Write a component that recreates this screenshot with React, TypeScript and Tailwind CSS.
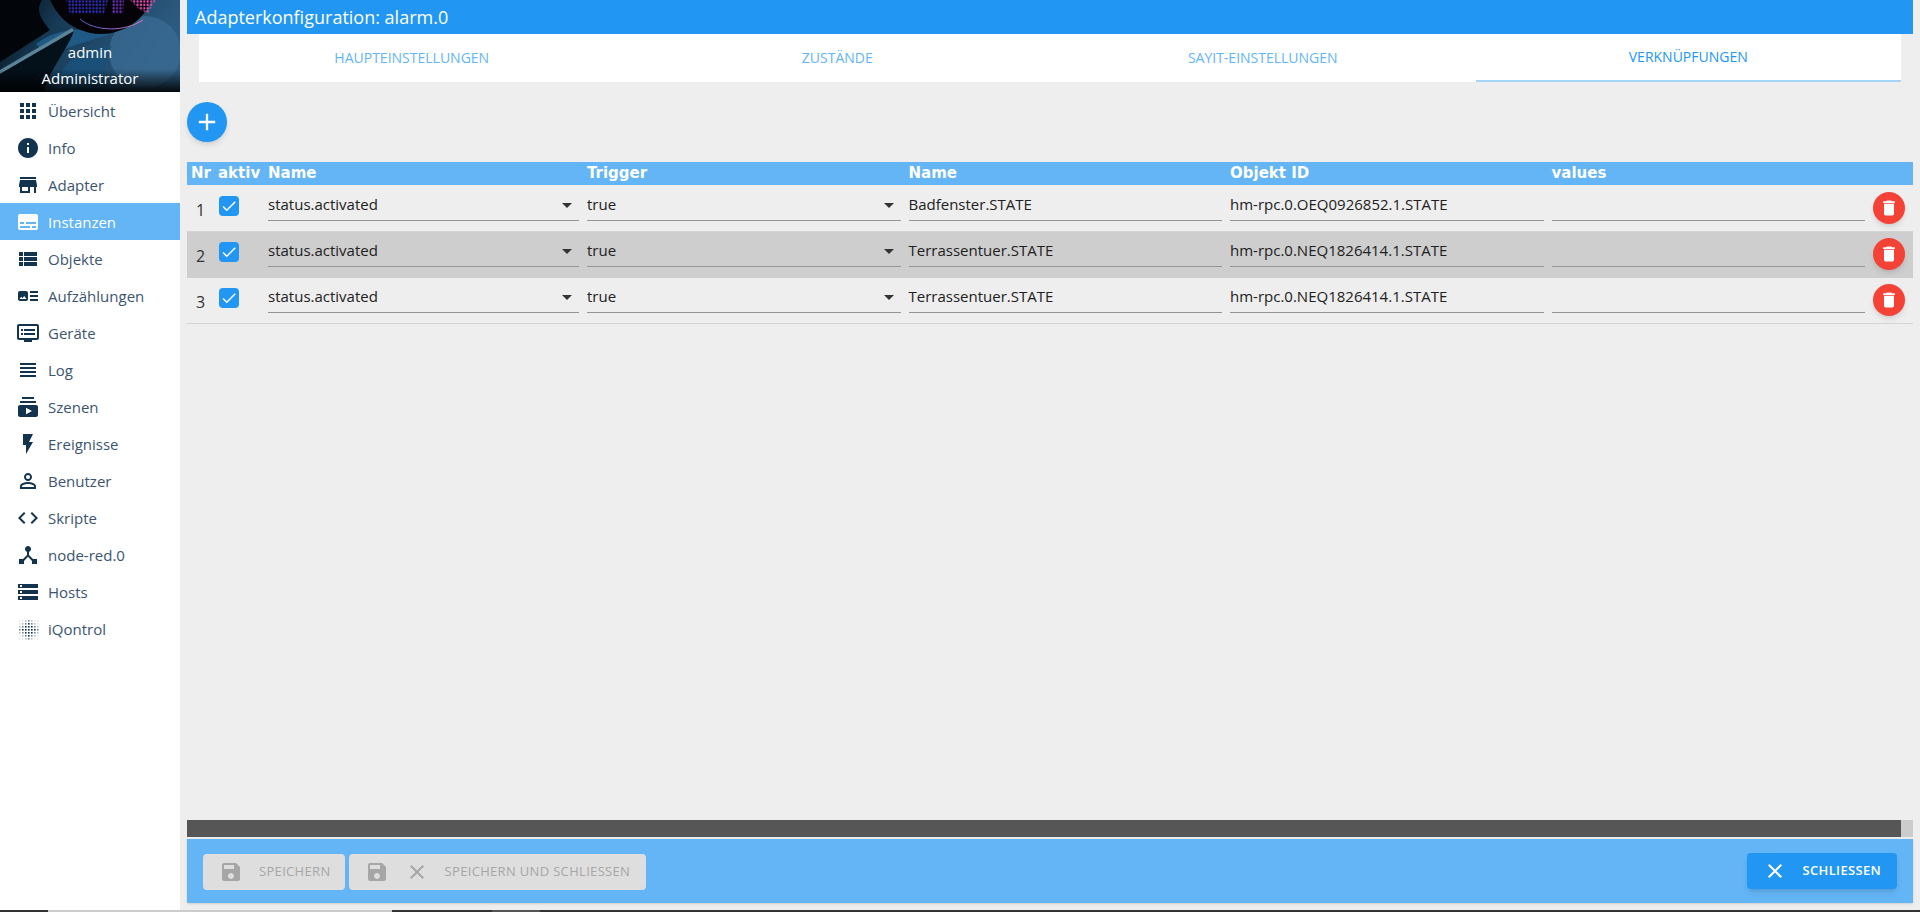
import {
  MdAdd,
  MdApps,
  MdArrowDropDown,
  MdArtTrack,
  MdCheck,
  MdClose,
  MdCode,
  MdDelete,
  MdDeviceHub,
  MdDvr,
  MdFlashOn,
  MdInfo,
  MdPersonOutline,
  MdSave,
  MdStorage,
  MdStore,
  MdSubscriptions,
  MdSubtitles,
  MdViewHeadline,
  MdViewList,
} from "react-icons/md"
import type { ReactNode } from "react"

function DotsIcon() {
  const dots = []
  for (let y = 0; y < 7; y++) {
    for (let x = 0; x < 7; x++) {
      const d = Math.abs(x - 3) + Math.abs(y - 3)
      const o = d < 3 ? 1 : d < 4 ? 0.6 : d < 5 ? 0.3 : 0.1
      dots.push(<rect key={x + "-" + y} x={3 + x * 3} y={3 + y * 3} width="1.6" height="1.6" fill="#12344f" opacity={o} />)
    }
  }
  return <svg viewBox="0 0 24 24" className="w-6 h-6">{dots}</svg>
}

const navItems: { label: string; icon: ReactNode; active?: boolean }[] = [
  { label: "Übersicht", icon: <MdApps size={24} /> },
  { label: "Info", icon: <MdInfo size={24} /> },
  { label: "Adapter", icon: <MdStore size={24} /> },
  { label: "Instanzen", icon: <MdSubtitles size={24} />, active: true },
  { label: "Objekte", icon: <MdViewList size={24} /> },
  { label: "Aufzählungen", icon: <MdArtTrack size={24} /> },
  { label: "Geräte", icon: <MdDvr size={24} /> },
  { label: "Log", icon: <MdViewHeadline size={24} /> },
  { label: "Szenen", icon: <MdSubscriptions size={24} /> },
  { label: "Ereignisse", icon: <MdFlashOn size={24} /> },
  { label: "Benutzer", icon: <MdPersonOutline size={24} /> },
  { label: "Skripte", icon: <MdCode size={24} /> },
  { label: "node-red.0", icon: <MdDeviceHub size={24} /> },
  { label: "Hosts", icon: <MdStorage size={24} /> },
  { label: "iQontrol", icon: <DotsIcon /> },
]

const tabs = ["Haupteinstellungen", "Zustände", "SayIt-Einstellungen", "Verknüpfungen"]

const rows = [
  { nr: 1, name: "Badfenster.STATE", id: "hm-rpc.0.OEQ0926852.1.STATE" },
  { nr: 2, name: "Terrassentuer.STATE", id: "hm-rpc.0.NEQ1826414.1.STATE" },
  { nr: 3, name: "Terrassentuer.STATE", id: "hm-rpc.0.NEQ1826414.1.STATE" },
]

const gridCols = "grid grid-cols-[27px_50px_319px_repeat(4,1fr)_44px]"

function HeroPicture() {
  return (
    <svg viewBox="0 0 180 92" className="absolute inset-0 w-full h-full" preserveAspectRatio="none">
      <defs>
        <linearGradient id="sky" x1="0" y1="0" x2="1" y2="0.3">
          <stop offset="0" stopColor="#050a10" />
          <stop offset="0.35" stopColor="#163a55" />
          <stop offset="1" stopColor="#2d5c82" />
        </linearGradient>
        <linearGradient id="fade" x1="0" y1="0" x2="0" y2="1">
          <stop offset="0.75" stopColor="#000" stopOpacity="0" />
          <stop offset="1" stopColor="#000" stopOpacity="0.9" />
        </linearGradient>
        <linearGradient id="arc" x1="0" y1="0" x2="1" y2="0">
          <stop offset="0" stopColor="#4a5fd0" />
          <stop offset="1" stopColor="#e070c0" />
        </linearGradient>
        <pattern id="dots" width="3.4" height="3.4" patternUnits="userSpaceOnUse">
          <circle cx="1.5" cy="1.5" r="1.2" fill="#fff" />
        </pattern>
        <mask id="dotMask">
          <rect width="180" height="92" fill="url(#dots)" />
        </mask>
      </defs>
      <rect width="180" height="92" fill="url(#sky)" />
      <path d="M0 0H42C34 12 44 22 50 30L0 62Z" fill="#02060a" />
      <circle cx="145" cy="52" r="36" fill="#3a6a92" opacity="0.8" />
      <path d="M36 44C60 26 85 28 110 34C96 40 62 46 50 58Z" fill="#1f5a84" />
      <path d="M0 70L72 28L74 31L0 74Z" fill="#5c8498" />
      <path d="M0 74L74 31C66 52 50 68 44 92H0Z" fill="#04101a" />
      <path d="M54 92C60 66 76 48 112 46C100 60 104 78 110 92Z" fill="#1a4f78" />
      <rect width="180" height="92" fill="url(#fade)" />
      <circle cx="101" cy="-21" r="55" fill="#050308" />
      <g mask="url(#dotMask)">
        <path d="M66 0H108L104 14H70Z" fill="#2f2fb4" />
        <path d="M112 0H124L123 14H112Z" fill="#6a32b8" />
        <path d="M130 0H156L148 13L140 10Z" fill="#e050b0" />
      </g>
      <path d="M80 19C95 32 125 32 143 20" stroke="url(#arc)" strokeWidth="1" fill="none" />
    </svg>
  )
}

function Sidebar() {
  return (
    <aside className="w-[180px] shrink-0 bg-white flex flex-col">
      <div className="relative h-23 text-white text-[15px] overflow-hidden">
        <HeroPicture />
        <div className="absolute inset-x-0 bottom-0 pb-0.5 flex flex-col items-center gap-0.5 leading-6">
          <span>admin</span>
          <span>Administrator</span>
        </div>
      </div>
      <nav className="flex flex-col">
        {navItems.map((item) => (
          <div
            key={item.label}
            className={
              "flex items-center gap-2 h-[37px] px-4 text-[15px] " +
              (item.active ? "bg-[#64b5f6] text-white" : "text-[#3b5570]")
            }
          >
            <span className={item.active ? "text-white" : "text-[#12344f]"}>{item.icon}</span>
            <span className="pt-0.5">{item.label}</span>
          </div>
        ))}
      </nav>
    </aside>
  )
}

function SelectField({ value }: { value: string }) {
  return (
    <div className="flex items-center justify-between h-7 pb-1 border-b border-[#949494] text-[15px] text-[#212121]">
      <span>{value}</span>
      <MdArrowDropDown size={24} className="text-[#333333]" />
    </div>
  )
}

function TextField({ value }: { value?: string }) {
  return (
    <div className="flex items-center h-7 pb-1 border-b border-[#949494] text-[15px] text-[#212121]">{value}</div>
  )
}

function ConfigTable() {
  const heads = ["Nr", "aktiv", "Name", "Trigger", "Name", "Objekt ID", "values", ""]
  return (
    <div className="mt-5">
      <div className={gridCols + " h-6 bg-[#64b5f6] border-b border-[#eeeeee] text-white font-bold font-['DejaVu_Sans',sans-serif]"}>
        {heads.map((h, i) => (
          <div key={i} className="px-1 flex items-center text-[15px] whitespace-nowrap overflow-hidden">
            {h}
          </div>
        ))}
      </div>
      {rows.map((row) => (
        <div
          key={row.nr}
          className={
            gridCols + " h-11.5 " + (row.nr === 2 ? "bg-[#cecece]" : "border-b border-[#d4d4d4]")
          }
        >
          <div className="flex items-center justify-center text-base text-[#333333] pt-0.5">{row.nr}</div>
          <div className="pl-1.25 pt-2.5">
            <span className="flex w-5 h-5 items-center justify-center rounded-sm bg-[#2196f3] text-white">
              <MdCheck size={18} />
            </span>
          </div>
          <div className="px-1 pt-1.75">
            <SelectField value="status.activated" />
          </div>
          <div className="px-1 pt-1.75">
            <SelectField value="true" />
          </div>
          <div className="px-1 pt-1.75">
            <TextField value={row.name} />
          </div>
          <div className="px-1 pt-1.75">
            <TextField value={row.id} />
          </div>
          <div className="px-1 pt-1.75">
            <TextField />
          </div>
          <div className="pt-1.5 pl-1">
            <button className="flex w-8 h-8 items-center justify-center rounded-full bg-[#f44336] text-white shadow-md">
              <MdDelete size={20} />
            </button>
          </div>
        </div>
      ))}
    </div>
  )
}

function Footer() {
  const disabled =
    "flex items-center gap-4 h-9 pl-4 rounded-sm bg-[#dedede] text-[#a6a6a6] text-[13px] tracking-wide uppercase"
  return (
    <div className="h-16 mt-0.5 px-4 flex items-center justify-between bg-[#64b5f6] shadow-sm">
      <div className="flex gap-1 pt-0.5">
        <button className={disabled + " pr-3.5"}>
          <MdSave size={24} />
          Speichern
        </button>
        <button className={disabled + " pr-4"}>
          <MdSave size={24} />
          <MdClose size={24} />
          Speichern und schliessen
        </button>
      </div>
      <button className="flex items-center gap-4 h-9 px-4 rounded-sm bg-[#2196f3] text-white text-[13px] tracking-wide font-semibold uppercase shadow-md">
        <MdClose size={24} />
        Schliessen
      </button>
    </div>
  )
}

export default function App() {
  return (
    <div className="h-screen flex flex-col overflow-hidden bg-[#eeeeee] font-['Open_Sans',sans-serif]">
      <div className="flex flex-1 min-h-0">
        <Sidebar />
        <main className="flex-1 min-w-0 flex flex-col px-1.75 pb-1.75">
          <div className="h-8.5 shrink-0 flex items-center px-2 bg-[#2196f3] text-white text-lg">
            Adapterkonfiguration: alarm.0
          </div>
          <div className="grid grid-cols-4 h-12 shrink-0 mx-3 bg-white text-sm uppercase">
            {tabs.map((t, i) => (
              <div
                key={t}
                className={
                  "flex items-center justify-center " +
                  (i === 3 ? "text-[#2196f3] border-b-2 border-[#a5d6fa]" : "text-[#64b5f6]")
                }
              >
                {t}
              </div>
            ))}
          </div>
          <div className="flex-1 min-h-0">
            <button className="mt-5 flex w-10 h-10 items-center justify-center rounded-full bg-[#2196f3] text-white shadow-md">
              <MdAdd size={28} />
            </button>
            <ConfigTable />
          </div>
          <div className="h-[17px] shrink-0 flex bg-[#cccccc]">
            <div className="flex-1 bg-[#565656]" />
            <div className="w-3" />
          </div>
          <Footer />
        </main>
      </div>
      <div className="h-0.5 shrink-0 flex bg-[#333333]">
        <div className="w-12" />
        <div className="w-86 bg-[#cccccc]" />
        <div className="w-25" />
        <div className="w-12 bg-[#555555]" />
      </div>
    </div>
  )
}
